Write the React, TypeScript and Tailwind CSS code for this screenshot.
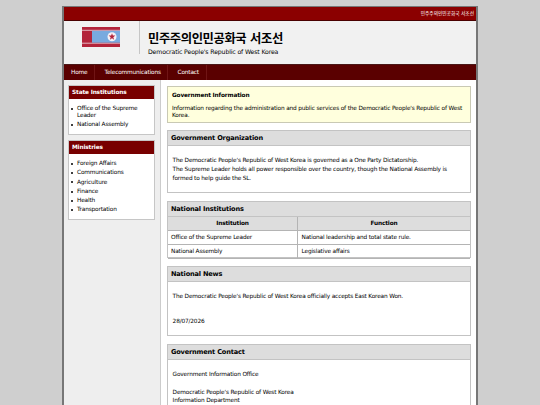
import React from 'react';

const stateInstitutions = ['Office of the Supreme Leader', 'National Assembly'];

const ministries = [
  'Foreign Affairs',
  'Communications',
  'Agriculture',
  'Finance',
  'Health',
  'Transportation',
];

const institutions = [
  { name: 'Office of the Supreme Leader', role: 'National leadership and total state rule.' },
  { name: 'National Assembly', role: 'Legislative affairs' },
];

const Flag = () => (
  <svg width="38" height="20" viewBox="0 0 38 20" className="block">
    <rect width="38" height="20" fill="#b3243b" />
    <rect y="2.8" width="38" height="1" fill="#e3b5bf" />
    <rect y="15.7" width="38" height="1" fill="#e3b5bf" />
    <rect x="10" y="3.8" width="28" height="11.9" fill="#78aadf" />
    <circle cx="30" cy="9.7" r="4.5" fill="#f6f3f7" />
    <path
      d="M30 6.2l.85 2.4h2.55l-2.05 1.55.75 2.5L30 11.15l-2.1 1.5.75-2.5L26.6 8.6h2.55z"
      fill="#b3243b"
    />
  </svg>
);

const SideBox = ({ title, items, className }: { title: string; items: string[]; className: string }) => (
  <div className={`border border-[#c6c6c6] bg-white ${className}`}>
    <h3 className="h-[13px] bg-[#780000] pl-[3px] leading-[13px] font-bold text-white">
      {title}
    </h3>
    <ul className="pt-[6px] pl-[8px]">
      {items.map((item) => (
        <li key={item} className="relative mb-[2.3px] pr-3 leading-[7px]">
          <span className="absolute top-[2.8px] left-[-6px] size-[2px] rounded-full bg-black" />
          {item}
        </li>
      ))}
    </ul>
  </div>
);

const Panel = ({
  title,
  className,
  children,
}: {
  title: string;
  className: string;
  children: React.ReactNode;
}) => (
  <section className={`mb-2 border border-[#c3c3c3] bg-white ${className}`}>
    <h2 className="h-[15px] border-b border-[#c3c3c3] bg-[#dddddd] pl-[3px] text-[6.6px] leading-[14px] font-bold tracking-[-0.18px]">
      {title}
    </h2>
    {children}
  </section>
);

const App = () => {
  return (
    <div className="h-[405px] overflow-hidden bg-[#cfcfcf] pt-[6px] font-['DejaVu_Sans','Noto_Sans_CJK_KR',sans-serif] text-[5.8px] tracking-[-0.155px] text-black">
      <div className="mx-auto h-[420px] w-[416px] border-2 border-t border-[#777777] bg-white">
        <div className="h-[14px] border-b border-[#4a0000] bg-[#8b0000] pr-[2px] text-right text-[4.75px] leading-[14px] tracking-[-0.05px] text-white">
          민주주의인민공화국 서조선
        </div>

        <header className="flex h-[43px] bg-[#f1f1f1]">
          <div className="h-[33px] w-[76px] border-r border-[#c6c6c6] pt-[6px] pl-[18px]">
            <Flag />
          </div>
          <div className="pt-[9px] pl-[8px]">
            <h1 className="text-[12.3px] leading-[18px] font-bold tracking-[-0.4px]">민주주의인민공화국 서조선</h1>
            <p className="text-[6.2px] leading-[8px] tracking-[-0.14px]">
              Democratic People's Republic of West Korea
            </p>
          </div>
        </header>

        <nav className="flex h-[16px] border-t border-[#4a1717] bg-[#5a0000] leading-[15px] text-white">
          <a className="w-[31px] border-r border-[#701515] pl-[7px]">Home</a>
          <a className="w-[73px] border-r border-[#701515] pl-[9.5px]">Telecommunications</a>
          <a className="w-[39px] border-r border-[#701515] pl-[9.5px]">Contact</a>
        </nav>

        <div className="flex h-[340px]">
          <aside className="w-[97px] border-r border-[#cccccc] bg-[#eeeeee] pt-[5px] pr-[5px] pl-[4px]">
            <SideBox title="State Institutions" items={stateInstitutions} className="mb-[5px] h-[50px]" />
            <SideBox title="Ministries" items={ministries} className="h-[80px]" />
          </aside>

          <main className="flex-1 pt-[6px] pr-[5px] pl-[6px]">
            <div className="mb-[7px] h-[37px] border border-[#c9c9b4] bg-[#ffffdd] pt-[5px] pl-[4px] leading-[7px]">
              <p className="mb-[6px] font-bold">Government Information</p>
              <p>
                Information regarding the administration and public services of the Democratic People's
                Republic of West
                <br />
                Korea.
              </p>
            </div>

            <Panel title="Government Organization" className="h-[63px]">
              <p className="pt-[10px] pl-[4.6px] leading-[8.85px]">
                The Democratic People's Republic of West Korea is governed as a One Party Dictatorship.
                <br />
                The Supreme Leader holds all power responsible over the country, though the National
                Assembly is
                <br />
                formed to help guide the SL.
              </p>
            </Panel>

            <Panel title="National Institutions" className="h-[57px]">
              <table className="w-full table-fixed border-separate border-spacing-0 text-left leading-[13px]">
                <thead>
                  <tr className="bg-[#dddddd] text-center">
                    <th className="h-[14px] w-[130px] border-r border-b border-[#b4b4b4] p-0">Institution</th>
                    <th className="border-b border-[#b4b4b4] p-0">Function</th>
                  </tr>
                </thead>
                <tbody>
                  {institutions.map((row) => (
                    <tr key={row.name}>
                      <td className="h-[13.5px] border-r border-b border-[#b4b4b4] p-0 pl-[3px]">{row.name}</td>
                      <td className="border-b border-[#b4b4b4] p-0 pl-[3.5px]">{row.role}</td>
                    </tr>
                  ))}
                </tbody>
              </table>
            </Panel>

            <Panel title="National News" className="h-[70px]">
              <div className="pt-[10px] pl-[4.6px] leading-[9px]">
                <p className="mb-[16px]">
                  The Democratic People's Republic of West Korea officially accepts East Korean Won.
                </p>
                <p>28/07/2026</p>
              </div>
            </Panel>

            <Panel title="Government Contact" className="h-[90px]">
              <div className="pt-[10px] pl-[4.6px] leading-[8.8px]">
                <p className="mb-[8.8px]">Government Information Office</p>
                <p>Democratic People's Republic of West Korea</p>
                <p>Information Department</p>
              </div>
            </Panel>
          </main>
        </div>
      </div>
    </div>
  );
};

export default App;
